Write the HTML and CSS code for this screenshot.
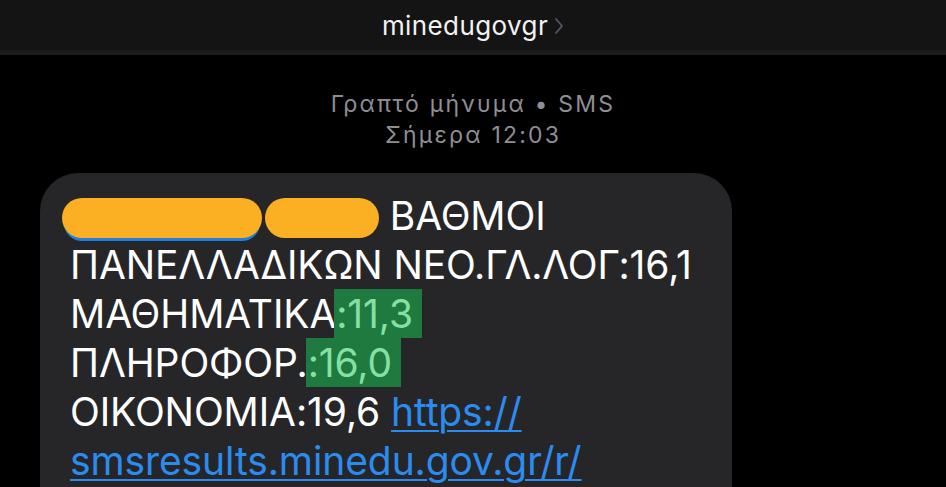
FILE: index.html
```html
<!DOCTYPE html>
<html lang="el">
<head>
  <meta charset="UTF-8" />
  <meta name="viewport" content="width=device-width, initial-scale=1.0" />
  <title>minedugovgr</title>
  <link rel="stylesheet" href="styles.css">
</head>
<body>
  <header class="topbar">
    <span class="sender">minedugovgr</span>
    <svg class="chevron" width="10" height="20" viewBox="0 0 10 20" aria-hidden="true">
      <path d="M2 3 L8 10 L2 17" fill="none" stroke="#58585c" stroke-width="1.8" stroke-linecap="round" stroke-linejoin="round"/>
    </svg>
  </header>

  <main class="thread">
    <div class="meta">
      <span>Γραπτό μήνυμα • SMS</span>
      <span>Σήμερα 12:03</span>
    </div>

    <div class="bubble">
      <p class="sms">
        <span class="redact redact-link"></span> <span class="redact redact-name"></span> ΒΑΘΜΟΙ<br>
        ΠΑΝΕΛΛΑΔΙΚΩΝ ΝΕΟ.ΓΛ.ΛΟΓ:16,1<br>
        ΜΑΘΗΜΑΤΙΚΑ<mark class="hl">:11,3</mark><br>
        ΠΛΗΡΟΦΟΡ.<mark class="hl">:16,0</mark><br>
        ΟΙΚΟΝΟΜΙΑ:19,6 <a class="link" href="#">https://</a><br>
        <a class="link" href="#">smsresults.minedu.gov.gr/r/</a>
      </p>
    </div>
  </main>
</body>
</html>
```

FILE: styles.css
```css
html, body {
  margin: 0;
  padding: 0;
  height: 100%;
  overflow: hidden;
}
body {
  background: #000;
  color: #fff;
  font-family: Inter, "Noto Sans", sans-serif;
}

.topbar {
  height: 50px;
  background: #141414;
  border-bottom: 5px solid #1b1b1b;
  display: flex;
  align-items: center;
  justify-content: center;
  gap: 6px;
}
.sender {
  font-size: 26px;
  letter-spacing: 0.4px;
  color: #f2f2f2;
}
.chevron {
  margin-top: 2px;
}

.thread {
  padding: 34px 0 0 40px;
}
.meta {
  display: flex;
  flex-direction: column;
  align-items: center;
  width: 866px;
  color: #8e8e93;
  font-size: 23px;
  letter-spacing: 2.2px;
  line-height: 31px;
}

.bubble {
  margin-top: 22px;
  width: 692px;
  background: #262629;
  border-radius: 38px;
  padding: 18px 0 60px 30px;
  box-sizing: border-box;
}
.sms {
  margin: 0;
  font-size: 39px;
  line-height: 49px;
  letter-spacing: -0.1px;
}

.redact {
  display: inline-block;
  height: 40px;
  vertical-align: -8px;
  background: #fbb024;
  border-radius: 20px;
}
.redact-link {
  width: 200px;
  margin-left: -8px;
  box-shadow: 0 5px 0 -2px #1e7fe0;
}
.redact-name {
  width: 114px;
  margin-left: -8px;
}

.hl {
  background: #1f7a3f;
  color: #86e0a5;
  padding: 1px 9px 1px 2px;
  margin-left: -2px;
}

.link {
  color: #2a8cf0;
  text-decoration: underline;
  text-decoration-thickness: 2px;
  text-underline-offset: 4px;
}
```
